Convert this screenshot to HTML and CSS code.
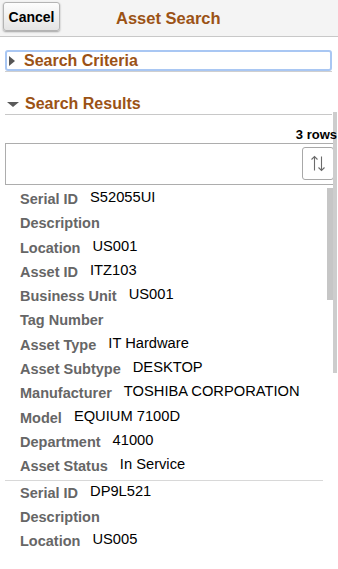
FILE: index.html
```html
<!DOCTYPE html>
<html>
<head>
<meta charset="utf-8">
<link rel="stylesheet" href="styles.css">
</head>
<body>
<header class="hdr">
  <button class="btn">Cancel</button>
  <h1 class="title">Asset Search</h1>
</header>

<section class="crit">
  <div class="crit-box"><span class="tri-r"></span><span class="sec-txt">Search Criteria</span></div>
</section>

<section class="res">
  <h2 class="res-hdr"><span class="tri-d"></span><span class="sec-txt">Search Results</span></h2>
  <div class="rowcount"><span class="rc-txt">3 rows</span></div>
  <div class="toolbar">
    <button class="sort" aria-label="Sort">
      <svg width="14" height="17" viewBox="0 0 14 17" fill="none" stroke="#6b6b6b" stroke-width="1.1">
        <path d="M3.5 1.5V15.5M0.5 4.5L3.5 1.5L6.5 4.5"/>
        <path d="M10.5 1.5V15.5M7.5 12.5L10.5 15.5L13.5 12.5"/>
      </svg>
    </button>
  </div>
  <div class="list">
    <div class="group">
      <div class="row"><span class="lbl">Serial ID</span><span class="val">S52055UI</span></div>
      <div class="row"><span class="lbl">Description</span><span class="val"></span></div>
      <div class="row"><span class="lbl">Location</span><span class="val">US001</span></div>
      <div class="row"><span class="lbl">Asset ID</span><span class="val">ITZ103</span></div>
      <div class="row"><span class="lbl">Business Unit</span><span class="val">US001</span></div>
      <div class="row"><span class="lbl">Tag Number</span><span class="val"></span></div>
      <div class="row"><span class="lbl">Asset Type</span><span class="val">IT Hardware</span></div>
      <div class="row"><span class="lbl">Asset Subtype</span><span class="val">DESKTOP</span></div>
      <div class="row"><span class="lbl">Manufacturer</span><span class="val">TOSHIBA CORPORATION</span></div>
      <div class="row"><span class="lbl">Model</span><span class="val">EQUIUM 7100D</span></div>
      <div class="row"><span class="lbl">Department</span><span class="val">41000</span></div>
      <div class="row"><span class="lbl">Asset Status</span><span class="val">In Service</span></div>
    </div>
    <div class="group">
      <div class="row"><span class="lbl">Serial ID</span><span class="val">DP9L521</span></div>
      <div class="row"><span class="lbl">Description</span><span class="val"></span></div>
      <div class="row"><span class="lbl">Location</span><span class="val">US005</span></div>
    </div>
  </div>
</section>

<div class="sb-outer"></div>
<div class="sb-inner"></div>
</body>
</html>
```

FILE: styles.css
```css
* { box-sizing: border-box; }
html, body {
  margin: 0;
  padding: 0;
  width: 338px;
  height: 569px;
  overflow: hidden;
  background: #fff;
  font-family: "Liberation Sans", Arial, sans-serif;
  color: #000;
}

.hdr {
  height: 37px;
  background: #f4f4f4;
  border-bottom: 1px solid #c8c8c8;
  display: flex;
  align-items: flex-start;
}
.btn {
  margin: 2px 0 0 3px;
  width: 57px;
  height: 29px;
  padding: 0;
  font-family: "Liberation Sans", Arial, sans-serif;
  font-size: 14px;
  font-weight: bold;
  color: #000;
  background: linear-gradient(#fdfdfd, #e4e4e4);
  border: 1px solid #b4b4b4;
  border-radius: 3px;
  box-shadow: 0 1px 2px rgba(0,0,0,0.35);
}
.title {
  margin: 0 0 0 56px;
  font-size: 16.5px;
  line-height: 36px;
  font-weight: bold;
  color: #9b5215;
}

.crit {
  margin: 13px 6px 0 5px;
  border-bottom: 1px solid #cfcfcf;
}
.crit-box {
  height: 21px;
  border: 2px solid #a9c7f3;
  border-radius: 3px;
  display: flex;
  align-items: center;
}
.tri-r {
  width: 0;
  height: 0;
  margin-left: 2px;
  margin-right: 9px;
  border-top: 5.5px solid transparent;
  border-bottom: 5.5px solid transparent;
  border-left: 6px solid #555;
}
.sec-txt {
  font-size: 16px;
  font-weight: bold;
  color: #9b5215;
  line-height: 18px;
}

.res-hdr {
  margin: 22px 6px 0 5px;
  height: 21px;
  border-bottom: 1px solid #c8c8c8;
  display: flex;
  align-items: center;
  padding-bottom: 0;
}
.tri-d {
  width: 0;
  height: 0;
  margin-left: 2px;
  margin-right: 6px;
  border-left: 6px solid transparent;
  border-right: 6px solid transparent;
  border-top: 5px solid #5a5a5a;
}

.rowcount {
  margin: 12px 1px 0 0;
  text-align: right;
  font-size: 13px;
  font-weight: bold;
  line-height: 16px;
  white-space: nowrap;
}
.rc-txt {
  position: relative;
  z-index: 2;
}
.toolbar {
  margin: 0 4px 0 5px;
  height: 42px;
  border: 1px solid #adadad;
  display: flex;
  justify-content: flex-end;
  align-items: flex-start;
  padding: 3px 0 0 0;
}
.sort {
  width: 32px;
  height: 33px;
  margin-right: -1px;
  padding: 0;
  background: #fff;
  border: 1px solid #a8a8a8;
  border-radius: 3px;
  display: flex;
  align-items: center;
  justify-content: center;
}

.list { margin-top: 3px; }
.group {
  margin: 0 15px 0 5px;
  padding-left: 15px;
}
.group + .group { border-top: 1px solid #d8d8d8; padding-top: 1px; }
.row {
  height: 24.3px;
  display: flex;
  align-items: flex-start;
  padding-top: 1px;
  white-space: nowrap;
}
.lbl {
  font-size: 14.5px;
  font-weight: bold;
  color: #666;
  line-height: 16px;
  margin-top: 2px;
}
.val {
  font-size: 14.7px;
  color: #000;
  line-height: 16px;
  margin-left: 12px;
}

.sb-outer {
  position: absolute;
  left: 333px;
  top: 112px;
  width: 4px;
  height: 261px;
  background: #cdcdcd;
}
.sb-inner {
  position: absolute;
  left: 327px;
  top: 188px;
  width: 6px;
  height: 112px;
  background: #c6c6c6;
}
```
